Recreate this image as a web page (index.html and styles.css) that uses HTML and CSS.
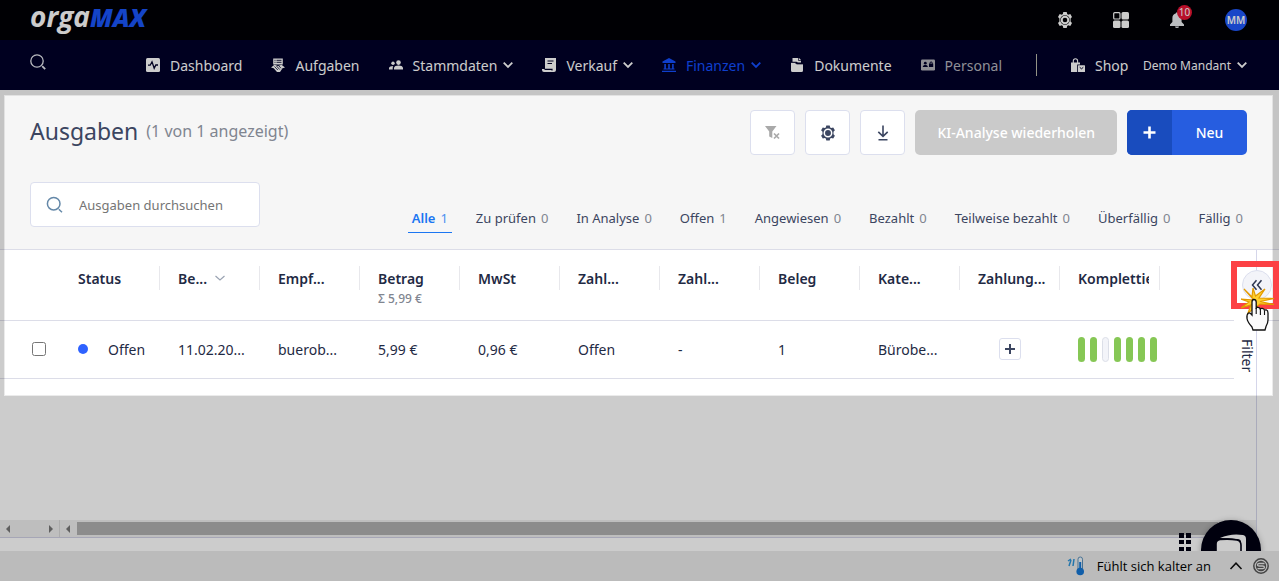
FILE: index.html
```html
<!DOCTYPE html>
<html lang="de">
<head>
<meta charset="utf-8">
<title>orgaMAX – Ausgaben</title>
<link rel="stylesheet" href="styles.css">
</head>
<body>
<div class="app">
  <header class="topbar">
    <a class="logo" href="#"><span class="logo-orga">orga</span><span class="logo-max">MAX</span></a>
    <div class="top-actions">
      <button class="icon-btn" aria-label="Einstellungen">
        <svg width="16" height="16" viewBox="0 0 16 16"><path fill="#fff" fill-rule="evenodd" d="M6.3 0h3.4l.5 2.1 1 .6 2.1-.7L15 4.900l-1.400 1.600v3L15 11.100 13.300 14l-2.100-.7-1 .6L9.700 16H6.300l-.5-2.100-1-.6-2.100.7L1 11.100l1.400-1.600v-3L1 4.900 2.700 2l2.100.7 1-.6zM8 3.200a4.800 4.800 0 1 0 0 9.600 4.800 4.800 0 0 0 0-9.600z"/><circle cx="8" cy="8" r="3.300" fill="none" stroke="#fff" stroke-width="2"/></svg>
      </button>
      <button class="icon-btn" aria-label="Apps">
        <svg width="16" height="16" viewBox="0 0 16 16"><rect x=".7" y=".7" width="6.300" height="6.300" rx="1" fill="none" stroke="#fff" stroke-width="1.200"/><rect x="8.500" width="7.500" height="7.500" rx="1.500" fill="#fff"/><rect y="8.500" width="7.500" height="7.500" rx="1.500" fill="#fff"/><rect x="8.500" y="8.500" width="7.500" height="7.500" rx="1.500" fill="#fff"/></svg>
      </button>
      <button class="icon-btn bell" aria-label="Benachrichtigungen">
        <svg width="16" height="16" viewBox="0 0 16 16"><path fill="#eceef2" d="M7 1.200a1 1 0 0 1 2 0C11.400 1.800 12.600 3.600 12.600 6v4l2.400 2.600V14H1v-1.400L3.400 10V6C3.400 3.600 4.600 1.800 7 1.200zM6 14.500h4a2 1.500 0 0 1-4 0z"/></svg>
        <span class="badge">10</span>
      </button>
      <button class="avatar">MM</button>
    </div>
  </header>

  <nav class="mainnav">
    <button class="icon-btn nav-search" aria-label="Suche">
      <svg width="16" height="16" viewBox="0 0 16 16" fill="none" stroke="#e8eaf0" stroke-width="1.300"><circle cx="7" cy="7" r="6.200"/><path d="M12.200 12.200l3 3" stroke-width="1.800"/></svg>
    </button>
    <div class="nav-items">
      <a class="nav-item" href="#"><svg width="14" height="14" viewBox="0 0 14 14"><rect width="14" height="14" rx="1.500" fill="#fff"/><path d="M2 7.200h2.200L6 3.800l2.200 6.400L9.800 7H12" fill="none" stroke="#000029" stroke-width="1.300"/></svg>Dashboard</a>
      <a class="nav-item" href="#"><svg width="14" height="14" viewBox="0 0 14 14"><path d="M2.200.5h9.600v6H2.200z" fill="#fff"/><path d="M3.500 2.300h1M5.500 2.300h5M3.500 4.300h1M5.500 4.300h5" stroke="#000029" stroke-width=".9"/><path d="M0 9.500l3.500-2.700L7 8l3.500-1.200L14 9.500l-2.500.8L9 14H6l-3.300-3.800z" fill="#fff"/><path d="M3.500 8.500L6.800 12M5.500 8l3.200 3.500M8 8l2 2.300" stroke="#000029" stroke-width=".8"/></svg>Aufgaben</a>
      <a class="nav-item" href="#"><svg width="14" height="14" viewBox="0 0 14 14" fill="#fff"><circle cx="9.500" cy="4.600" r="2.300"/><circle cx="4" cy="5.300" r="1.700"/><path d="M5 11.500V10c0-1.700 2.300-2.500 4.500-2.500S14 8.300 14 10v1.500zM0 11.500v-1.300C0 8.800 2 8 4.300 8 3.800 8.800 3.700 9.600 3.700 11.500z"/></svg>Stammdaten<svg class="chev" width="10" height="10" viewBox="0 0 10 10"><path d="M.7 2.700L5 7l4.300-4.300"/></svg></a>
      <a class="nav-item" href="#"><svg width="14" height="14" viewBox="0 0 14 14"><path d="M3 0h11v12a2 2 0 0 1-2 2H2a2 2 0 0 1-2-2v-1h3z" fill="#fff"/><path d="M5.500 3h6M5.500 5.500h4.500M2.500 11.400h7.500v1" fill="none" stroke="#000029" stroke-width="1.200"/></svg>Verkauf<svg class="chev" width="10" height="10" viewBox="0 0 10 10"><path d="M.7 2.700L5 7l4.300-4.300"/></svg></a>
      <a class="nav-item active" href="#"><svg width="14" height="14" viewBox="0 0 14 14" fill="#134fff"><path d="M7 0l6.500 3.500V5H.5V3.500zM2.300 6h1.600v4.500H2.300zM6.200 6h1.600v4.500H6.200zM10.100 6h1.600v4.500h-1.600zM1.500 10.500h11v1h-11zM0 12.800h14V14H0z"/></svg>Finanzen<svg class="chev" width="10" height="10" viewBox="0 0 10 10"><path d="M.7 2.700L5 7l4.300-4.300"/></svg></a>
      <a class="nav-item" href="#"><svg width="14" height="14" viewBox="0 0 14 14" fill="#fff"><path d="M2.500 0H9l2 2v2.500H8L6.500 3.700h-4z"/><path d="M1 4.500h4L6.500 6H13v6.500A1.500 1.500 0 0 1 11.500 14h-9A1.500 1.500 0 0 1 1 12.500z"/><path d="M1 4.500h4L6.500 6H13M8.500 0v2.500H11" fill="none" stroke="#000029" stroke-width=".7"/></svg>Dokumente</a>
      <a class="nav-item muted" href="#"><svg width="14" height="14" viewBox="0 0 14 14"><rect y="1.500" width="14" height="11" rx="1.200" fill="#b4b4bc"/><g fill="#000029"><circle cx="4.300" cy="5.200" r="1.400"/><path d="M1.800 9c0-2.600 5-2.600 5 0zM8 5.800h4.200V9H8z"/><path d="M9 6V5c0-1.500 2.200-1.500 2.200 0v1" fill="none" stroke="#000029"/></g></svg>Personal</a>
      <span class="nav-divider"></span>
      <a class="nav-item" href="#"><svg width="14" height="14" viewBox="0 0 14 14"><path d="M0 4.500h9v2H6.200V14H0z" fill="#fff"/><path d="M2.300 6V3c0-3 4.300-3 4.300 0v3" fill="none" stroke="#fff" stroke-width="1.100"/><rect x="7" y="7.300" width="7" height="6.700" rx=".5" fill="#fff"/><path d="M8.700 9.300l1.800 1.500 1.800-1.500" fill="none" stroke="#000029"/></svg>Shop</a>
    </div>
    <button class="client">Demo Mandant<svg class="chev" width="10" height="10" viewBox="0 0 10 10"><path d="M.7 2.700L5 7l4.300-4.300"/></svg></button>
  </nav>

  <main class="content">
    <section class="page-head">
      <div class="title-row">
        <h1>Ausgaben <small>(1 von 1 angezeigt)</small></h1>
        <div class="toolbar">
          <button class="tool" aria-label="Filter löschen"><svg width="16" height="16" viewBox="0 0 16 16"><path d="M0 1h11.500L7.300 6.500V13L4.200 11.500v-5z" fill="#a9a9a9"/><path d="M9 8.500l5 5M14 8.500l-5 5" stroke="#a9a9a9" stroke-width="1.700"/></svg></button>
          <button class="tool" aria-label="Tabelleneinstellungen"><svg width="16" height="16" viewBox="0 0 16 16"><path fill="#3b4560" d="M6.300.5h3.400l.5 2 1 .6 2-.6 1.700 2.800-1.400 1.500v2.400l1.400 1.500-1.700 2.800-2-.6-1 .6-.5 2H6.300l-.5-2-1-.6-2 .6-1.700-2.800 1.400-1.500V6.800L1.100 5.300l1.700-2.800 2 .6 1-.6z"/><circle cx="8" cy="8" r="3.700" fill="#3b4560" stroke="#fff" stroke-width="1.500"/></svg></button>
          <button class="tool" aria-label="Herunterladen"><svg width="16" height="16" viewBox="0 0 16 16" fill="none" stroke="#3b4560" stroke-width="1.600"><path d="M8 .5v10.800M3.300 6.800L8 11.300l4.700-4.500M3.500 14.700h9"/></svg></button>
          <button class="ki" disabled>KI-Analyse wiederholen</button>
          <button class="new"><span class="plus"><svg width="13" height="13" viewBox="0 0 13 13" stroke="#fff" stroke-width="2.600"><path d="M6.500.5v12M.5 6.500h12"/></svg></span><span class="new-label">Neu</span></button>
        </div>
      </div>
      <div class="filter-row">
        <label class="search">
          <svg width="18" height="18" viewBox="0 0 18 18" fill="none" stroke="#6488a8" stroke-width="1.500"><circle cx="7.700" cy="7.700" r="6.300"/><path d="M12.800 13.200l3.200 3"/></svg>
          <input type="text" placeholder="Ausgaben durchsuchen" aria-label="Ausgaben durchsuchen">
        </label>
        <div class="tabs">
          <button class="tab current">Alle <span>1</span></button>
          <button class="tab">Zu prüfen <span>0</span></button>
          <button class="tab">In Analyse <span>0</span></button>
          <button class="tab">Offen <span>1</span></button>
          <button class="tab">Angewiesen <span>0</span></button>
          <button class="tab">Bezahlt <span>0</span></button>
          <button class="tab">Teilweise bezahlt <span>0</span></button>
          <button class="tab">Überfällig <span>0</span></button>
          <button class="tab">Fällig <span>0</span></button>
        </div>
      </div>
    </section>

    <section class="body">
      <div class="grid-side">
        <div class="table-wrap">
          <table>
            <colgroup><col class="c-check"><col class="c"><col class="c"><col class="c"><col class="c"><col class="c"><col class="c"><col class="c"><col class="c"><col class="c"><col class="c"><col class="c"><col></colgroup>
            <thead>
              <tr>
                <td></td>
                <th><div>Status</div></th>
                <th><div>Be...<svg class="sort" width="10" height="10" viewBox="0 0 10 10"><path d="M.5 3L5 7l4.500-4" fill="none" stroke="#9aa3b2" stroke-width="1.200"/></svg></div></th>
                <th><div>Empf...</div></th>
                <th><div>Betrag</div><p class="sum">Σ 5,99 €</p></th>
                <th><div>MwSt</div></th>
                <th><div>Zahl...</div></th>
                <th><div>Zahl...</div></th>
                <th><div>Beleg</div></th>
                <th><div>Kate...</div></th>
                <th><div>Zahlung...</div></th>
                <th><div><span class="clip">Komplettie</span></div></th>
                <td></td>
              </tr>
            </thead>
            <tbody>
              <tr>
                <td class="check"><input type="checkbox" aria-label="Zeile auswählen"></td>
                <td><span class="status"><i class="dot"></i>Offen</span></td>
                <td>11.02.20...</td>
                <td>buerob...</td>
                <td>5,99 €</td>
                <td>0,96 €</td>
                <td>Offen</td>
                <td>-</td>
                <td>1</td>
                <td>Bürobe...</td>
                <td><button class="add" aria-label="Zahlung hinzufügen"><svg width="10" height="10" viewBox="0 0 10 10" stroke="#3b4560" stroke-width="2"><path d="M5 0v10M0 5h10"/></svg></button></td>
                <td><span class="bars"><i></i><i></i><i class="empty"></i><i></i><i></i><i></i><i></i></span></td>
                <td></td>
              </tr>
            </tbody>
          </table>
        </div>
        <div class="scrollbars">
          <div class="scroll-left"><i class="arrow left"></i><i class="arrow right"></i></div>
          <div class="scroll-main"><i class="arrow left"></i><div class="thumb"></div></div>
        </div>
        <div class="grid-foot"></div>
      </div>
      <aside class="rail">
        <div class="rail-head"></div>
        <button class="expand" aria-label="Filter öffnen"><svg width="12" height="12" viewBox="0 0 12 12" fill="none" stroke="#2d3650" stroke-width="1.500"><path d="M5.500 1.200L1.500 6l4 4.800M10.500 1.200L6.500 6l4 4.800"/></svg></button>
        <button class="filter-tab">Filter</button>
      </aside>
      <svg class="drag" width="12" height="18" viewBox="0 0 12 18" fill="#000012"><path d="M0 0h5v5H0zM7 0h5v5H7zM0 7h5v4H0zM7 7h5v4H7zM0 14h5v4H0zM7 14h5v4H7z"/></svg>
      <button class="chat" aria-label="Chat">
        <svg width="32" height="32" viewBox="0 0 32 32"><path d="M5 4Q16-1 28 1q3 .5 3 4v25H26V8q0-3-4-3-9-1-17-1z" fill="#fff"/><path d="M1 30V10q0-4 4-4.500 9-1 17 .5 4 1 4 5v19z" fill="#fff" stroke="#000012" stroke-width="1.600"/></svg>
      </button>
    </section>
  </main>

  <footer class="taskbar">
    <svg width="18" height="20" viewBox="0 0 18 20"><path d="M1 5l3-2M2 10l2-6M6 10l1-7" stroke="#2d94d8" stroke-width="1.500" fill="none"/><rect x="11" y="1" width="4.500" height="14" rx="2.200" fill="#eef6fc" stroke="#5a8fb8"/><path d="M13.200 6v9" stroke="#1476d4" stroke-width="2"/><circle cx="13.200" cy="15.500" r="3.800" fill="#1476d4"/></svg>
    <span class="weather">Fühlt sich kalter an</span>
    <svg class="caret" width="14" height="10" viewBox="0 0 14 10" fill="none" stroke="#111" stroke-width="1.500"><path d="M1.500 8L7 2.200 12.500 8"/></svg>
    <svg width="16" height="16" viewBox="0 0 16 16" fill="none"><circle cx="8" cy="8" r="7.200" stroke="#555" stroke-width="1.500"/><circle cx="8" cy="8" r="5.200" fill="#555"/><path d="M11.500 5.500H6.500q-2 0-2 1.300T6.500 8h3q2 0 2 1.300t-2 1.300h-5" stroke="#eaeaea" stroke-width="1.300"/></svg>
  </footer>

  <div class="spotlight"></div>
  <div class="marker"></div>
  <svg class="cursor" width="34" height="44" viewBox="0 0 34 44">
    <path d="M13 12L3 1l8 8L12 0l2.500 8L24 1l-6 9 15 .5-14 3 14 3-14-.5L7 25l3-8L0 20l8-6-8-3z" fill="#ffd02e" stroke="#e39a00" stroke-width="1.200"/>
    <path d="M11 14q0-2.500 2-2.500t2.200 2.500v7q0-2 2-1.700 2 .2 2.200 2.300 0-1.500 2-1.200 2 .3 2.200 2.200.3-1 1.700-.7 1.700.4 1.700 3V32q0 3-2 6.500l-1 3.500H12l-1-3q-4.500-5-5-8.500-.5-4 1.500-5.500 1.500-.5 3.500 2z" fill="#fafafa" stroke="#111" stroke-width="1.300"/>
    <path d="M15.200 20v6M19.400 21v6M23.500 22.500V27" stroke="#111" stroke-width="1.100"/>
  </svg>
</div>
</body>
</html>
```
FILE: styles.css
```css
* { box-sizing: border-box; }
body { margin: 0; font-family: "Noto Sans", "Open Sans", sans-serif; font-size: 14px; color: #1f2a44; }
button { font: inherit; color: inherit; margin: 0; padding: 0; border: 0; background: none; cursor: pointer; }
a { color: inherit; text-decoration: none; }
svg { display: block; flex: none; }

.app { position: relative; display: flex; flex-direction: column; min-height: 100vh; overflow: hidden; background: #fff; }

.topbar { display: flex; justify-content: space-between; align-items: center; height: 40px; padding: 0 32px 0 30px; background: #000006; }
.logo { font-family: "Open Sans", sans-serif; font-style: italic; line-height: 32px; color: #fff; display: flex; align-items: baseline; padding-bottom: 8px; }
.logo-orga { font-size: 28px; font-weight: 700; }
.logo-max { font-size: 25px; font-weight: 800; color: #1a55fa; }
.top-actions { display: flex; align-items: center; gap: 40px; }
.icon-btn { position: relative; display: flex; }
.badge { position: absolute; top: -7px; left: 8px; width: 15px; height: 15px; border-radius: 8px; background: #e61435; color: #fff; font-size: 10px; line-height: 15px; text-align: center; }
.avatar { width: 22px; height: 22px; border-radius: 11px; background: #2058fa; color: #fff; font-size: 10px; font-weight: 600; line-height: 22px; text-align: center; }

.mainnav { display: flex; align-items: center; height: 50px; padding: 0 32px 0 30px; background: #000029; color: #fff; }
.nav-search { padding-bottom: 6px; }
.nav-items { flex: 1; display: flex; align-items: center; gap: 29px; padding-left: 100px; }
.nav-item { display: flex; align-items: center; gap: 10px; white-space: nowrap; }
.nav-item .chev { margin-left: -4px; }
.nav-item.active { color: #134fff; }
.nav-item.muted { color: #b4b4bc; }
.chev { fill: none; stroke: currentColor; stroke-width: 1.8; }
.nav-divider { width: 1px; height: 22px; margin: 0 5px; background: #b8b8a8; }
.client { display: flex; align-items: center; gap: 6px; font-size: 12px; white-space: nowrap; }

.content { flex: 1; display: flex; flex-direction: column; }
.page-head { display: flex; flex-direction: column; gap: 27px; padding: 20px 32px 16px 30px; background: #f6f6f6; border-bottom: 1px solid #dcdde8; }
.title-row, .filter-row { display: flex; justify-content: space-between; }
.filter-row { align-items: flex-start; }
h1 { display: flex; align-items: center; gap: 8px; height: 42px; margin: 0; font-size: 23px; font-weight: 400; color: #3b4560; }
h1 small { font-size: 16px; color: #808590; }
.toolbar { display: flex; gap: 10px; }
.tool { display: flex; align-items: center; justify-content: center; width: 45px; height: 45px; background: #fff; border: 1px solid #dcdfee; border-radius: 4px; }
.ki { height: 45px; padding: 0 22px; border-radius: 5px; background: #cacaca; color: #fff; font-weight: 500; font-size: 14px; }
.new { display: flex; height: 45px; border-radius: 5px; overflow: hidden; background: #265de0; color: #fff; font-weight: 500; }
.plus { display: flex; align-items: center; justify-content: center; width: 45px; height: 45px; background: #194cbe; }
.new-label { width: 75px; line-height: 45px; }
.search { display: flex; align-items: center; gap: 15px; width: 230px; height: 45px; padding: 0 15px; background: #fff; border: 1px solid #dcdfee; border-radius: 4px; }
.search input { flex: 1; min-width: 0; padding: 0; border: 0; outline: 0; background: none; font: inherit; font-size: 13px; color: #3b4560; }
.search input::placeholder { color: #757575; opacity: 1; }
.tabs { display: flex; gap: 20px; padding-top: 22px; }
.tab { display: flex; gap: 5px; height: 29px; padding: 0 4px; font-size: 13px; line-height: 28px; color: #3b4560; border-bottom: 1px solid transparent; white-space: nowrap; }
.tab span { color: #808590; }
.tab.current { color: #1b76f2; border-color: #1b76f2; font-weight: 600; }
.tab.current span { color: #4a8ff0; font-weight: 400; }

.body { position: relative; flex: 1; display: flex; overflow: hidden; }
.grid-side { flex: 1; min-width: 0; display: flex; flex-direction: column; }
.table-wrap { flex: 1; padding-right: 22px; }
table { width: 100%; table-layout: fixed; border-collapse: collapse; }
.c-check { width: 60px; }
.c { width: 100px; }
tr { border-bottom: 1px solid #dcdde8; }
th, td { padding: 0; text-align: left; font-weight: 400; white-space: nowrap; }
thead tr { height: 70px; }
th { vertical-align: top; padding-top: 16px; font-weight: 600; }
th div { display: flex; align-items: center; height: 24px; padding-left: 18px; border-right: 1px solid #e8e8ec; }
.sort { margin-left: 8px; }
.clip { width: 71px; overflow: hidden; }
.sum { margin: 0; padding-left: 18px; font-size: 12px; line-height: 18px; font-weight: 500; color: #808590; }
tbody tr { height: 58px; }
tbody td { padding-left: 18px; }
tbody td.check { padding-left: 32px; }
.check input { display: block; width: 14px; height: 14px; margin: 0; }
.status { display: flex; align-items: center; gap: 20px; }
.dot { width: 10px; height: 10px; border-radius: 5px; background: #2e62ff; }
.add { display: flex; align-items: center; justify-content: center; width: 22px; height: 22px; margin-left: 21px; border: 1px solid #dcdfee; border-radius: 3px; background: #fff; }
.bars { display: flex; gap: 5px; }
.bars i { width: 7px; height: 25px; border-radius: 4px; background: #86c755; }
.bars i.empty { background: #f3f4f9; border: 1px solid #dcdfe8; }

.scrollbars { display: flex; height: 17px; background: #eee; }
.scroll-left { display: flex; align-items: center; justify-content: space-between; width: 60px; padding: 0 6px; border-right: 1px solid #d8d8d8; }
.scroll-main { flex: 1; display: flex; align-items: center; gap: 7px; padding: 0 38px 0 6px; }
.arrow { border: 4px solid transparent; }
.arrow.left { border-left-width: 0; border-right-color: #777; }
.arrow.right { border-right-width: 0; border-left-color: #777; }
.thumb { flex: 1; height: 13px; background: #b0b0b0; }
.grid-foot { height: 14px; border-top: 1px solid #d0d0e4; }

.rail { position: relative; width: 23px; border-left: 1px solid #d5d6ea; background: #fff; }
.rail-head { height: 71px; border-bottom: 1px solid #dcdde8; }
.expand { position: absolute; top: 20px; left: -15px; display: flex; align-items: center; justify-content: center; width: 30px; height: 30px; border: 1px solid #dcdfee; border-radius: 15px; background: #f3f4f9; }
.filter-tab { position: absolute; top: 89px; left: -19px; writing-mode: vertical-rl; line-height: 18px; font-size: 14px; }
.drag { position: absolute; right: 88px; bottom: 0; }
.chat { position: absolute; right: 18px; bottom: -29px; display: flex; justify-content: center; width: 60px; height: 60px; padding-top: 14px; border-radius: 30px; background: #000012; box-shadow: 0 1px 6px rgba(0, 0, 0, .3); }

.taskbar { display: flex; align-items: center; justify-content: flex-end; height: 30px; padding: 0 10px; background: #eaeaea; color: #000; }
.weather { padding: 0 18px 0 12px; font-family: "Open Sans", sans-serif; font-size: 13px; white-space: nowrap; }
.caret { margin-right: 10px; }

/* Tour overlay: dims everything except the highlighted area */
.spotlight { position: absolute; top: 95px; right: 6px; bottom: 185px; left: 4px; border: 1px solid rgba(0, 0, 0, .08); box-shadow: 0 0 0 2000px rgba(0, 0, 0, .2); pointer-events: none; }
.marker { position: absolute; top: 261px; right: 0; width: 48px; height: 48px; border: 6px solid #fc4144; pointer-events: none; }
.cursor { position: absolute; top: 288px; right: 4px; pointer-events: none; }
```
